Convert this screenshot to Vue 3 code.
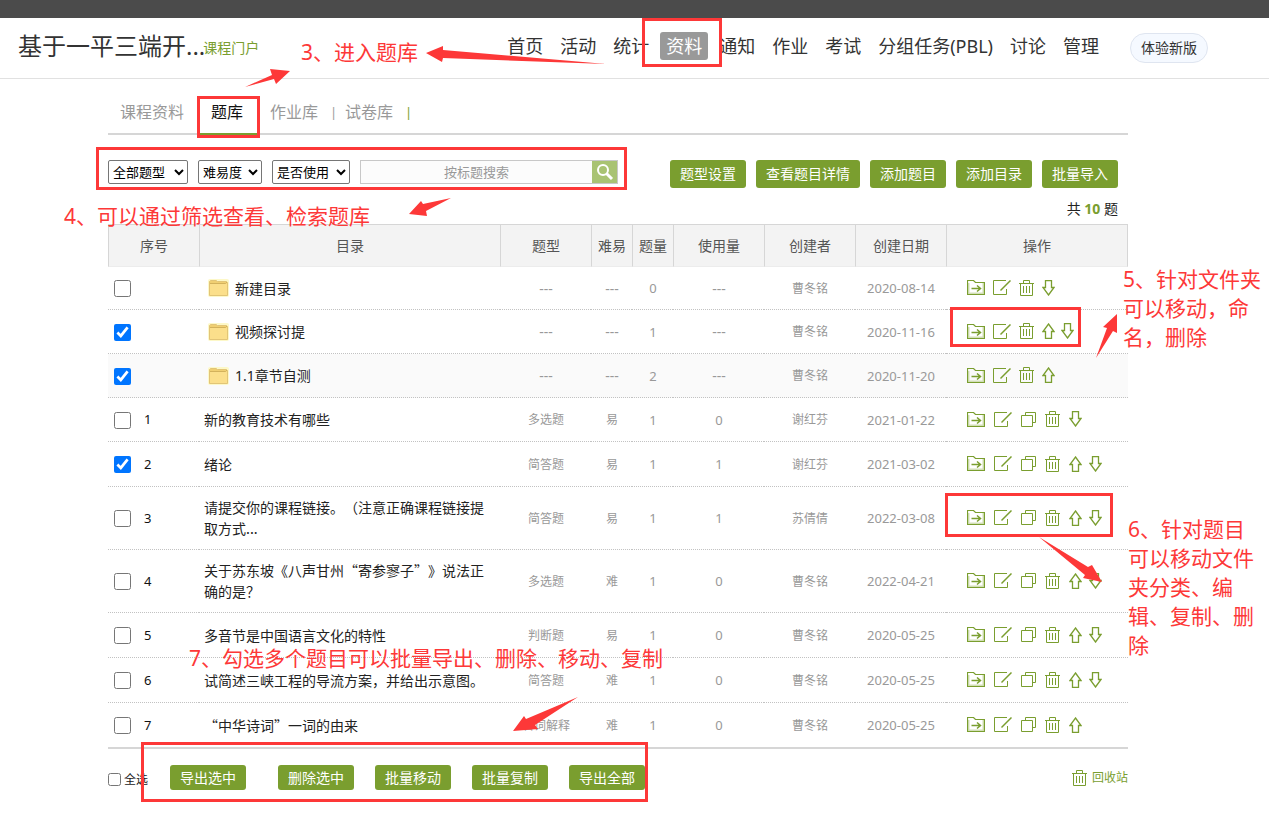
<script setup>
import { ref } from 'vue'

const navItems = ['首页', '活动', '统计', '资料', '通知', '作业', '考试', '分组任务(PBL)', '讨论', '管理']
const tabs = ['课程资料', '题库', '作业库', '试卷库']
const filters = [
  { label: '题型', value: '全部题型', cls: 'type' },
  { label: '难易', value: '难易度', cls: 'level' },
  { label: '使用', value: '是否使用', cls: 'used' }
]
const tools = ['题型设置', '查看题目详情', '添加题目', '添加目录', '批量导入']
const batch = ['导出选中', '删除选中', '批量移动', '批量复制', '导出全部']
const columns = ['序号', '目录', '题型', '难易', '题量', '使用量', '创建者', '创建日期', '操作']
const keyword = ref('')
const all = ref(false)

const labels = { move: '移动', edit: '编辑', copy: '复制', trash: '删除', up: '上移', down: '下移' }
const rows = ref([
  { folder: true, name: '新建目录', count: 0, by: '曹冬铭', date: '2020-08-14', acts: ['move', 'edit', 'trash', 'down'], checked: false },
  { folder: true, name: '视频探讨提', count: 1, by: '曹冬铭', date: '2020-11-16', acts: ['move', 'edit', 'trash', 'up', 'down'], checked: true },
  { folder: true, name: '1.1章节自测', count: 2, by: '曹冬铭', date: '2020-11-20', acts: ['move', 'edit', 'trash', 'up'], checked: true, active: true },
  { no: 1, name: '新的教育技术有哪些', type: '多选题', level: '易', count: 1, used: 0, by: '谢红芬', date: '2021-01-22', acts: ['move', 'edit', 'copy', 'trash', 'down'], checked: false },
  { no: 2, name: '绪论', type: '简答题', level: '易', count: 1, used: 1, by: '谢红芬', date: '2021-03-02', acts: ['move', 'edit', 'copy', 'trash', 'up', 'down'], checked: true },
  { no: 3, name: '请提交你的课程链接。（注意正确课程链接提取方式...', type: '简答题', level: '易', count: 1, used: 1, by: '苏倩倩', date: '2022-03-08', acts: ['move', 'edit', 'copy', 'trash', 'up', 'down'], checked: false },
  { no: 4, name: '关于苏东坡《八声甘州“寄参寥子”》说法正确的是？', type: '多选题', level: '难', count: 1, used: 0, by: '曹冬铭', date: '2022-04-21', acts: ['move', 'edit', 'copy', 'trash', 'up', 'down'], checked: false },
  { no: 5, name: '多音节是中国语言文化的特性', type: '判断题', level: '易', count: 1, used: 0, by: '曹冬铭', date: '2020-05-25', acts: ['move', 'edit', 'copy', 'trash', 'up', 'down'], checked: false },
  { no: 6, name: '试简述三峡工程的导流方案，并给出示意图。', type: '简答题', level: '难', count: 1, used: 0, by: '曹冬铭', date: '2020-05-25', acts: ['move', 'edit', 'copy', 'trash', 'up', 'down'], checked: false },
  { no: 7, name: '“中华诗词”一词的由来', type: '名词解释', level: '难', count: 1, used: 0, by: '曹冬铭', date: '2020-05-25', acts: ['move', 'edit', 'copy', 'trash', 'up'], checked: false }
])
</script>

<template>
  <div class="page">
    <div class="topbar"></div>
    <header class="header">
      <h1 class="title">基于一平三端开...</h1>
      <a class="portal" href="#">课程门户</a>
      <nav class="nav">
        <a v-for="item in navItems" :key="item" href="#" :class="{ current: item === '资料' }">{{ item }}</a>
      </nav>
      <button class="try" type="button">体验新版</button>
    </header>

    <main class="main">
      <div class="tabs">
        <a v-for="tab in tabs" :key="tab" href="#" class="tab" :class="{ on: tab === '题库' }">
          <span>{{ tab }}</span><i v-if="tab !== '课程资料'">|</i>
        </a>
      </div>

      <div class="toolbar">
        <select v-for="f in filters" :key="f.label" :aria-label="f.label" :class="f.cls">
          <option>{{ f.value }}</option>
        </select>
        <form class="search" @submit.prevent>
          <input v-model="keyword" type="text" placeholder="按标题搜索" aria-label="按标题搜索">
          <button type="submit" aria-label="搜索">
            <svg width="18" height="18" viewBox="0 0 18 18"><circle cx="7" cy="7" r="5" fill="none" stroke="#fff" stroke-width="2" /><path d="M10.5 10.5L16 16" stroke="#fff" stroke-width="3" /></svg>
          </button>
        </form>
        <div class="tools">
          <button v-for="t in tools" :key="t" type="button" class="btn">{{ t }}</button>
        </div>
      </div>

      <p class="total">共 <b>10</b> 题</p>

      <table>
        <colgroup>
          <col class="w91"><col><col class="w91"><col class="w41"><col class="w41"><col class="w91"><col class="w91"><col class="w91"><col class="w182">
        </colgroup>
        <thead>
          <tr><th v-for="c in columns" :key="c" scope="col">{{ c }}</th></tr>
        </thead>
        <tbody>
          <tr v-for="(r, i) in rows" :key="i" :class="{ active: r.active, short: i < 4 }">
            <td>
              <label class="pick"><input v-model="r.checked" type="checkbox" :aria-label="r.name"><span>{{ r.no }}</span></label>
            </td>
            <td class="name">
              <a v-if="r.folder" class="folder" href="#">
                <svg width="21" height="18" viewBox="0 0 21 18">
                  <rect x="0" y="0" width="21" height="18" rx="2" fill="#fdf8c8" />
                  <path d="M1.5 16.5V2.5L2.5 1.500H8L9.500 2.500H18.500L19.500 3.500V16.500Z" fill="#f0cf72" stroke="#e2c577" />
                  <path d="M2 16V5H18L19 4V16Z" fill="#fbdf8b" />
                  <path d="M2 4.500H17.500L19 3" fill="none" stroke="#d3b25c" />
                </svg>
                <span>{{ r.name }}</span>
              </a>
              <a v-else href="#">{{ r.name }}</a>
            </td>
            <td :class="{ dash: r.folder }">{{ r.type ?? '---' }}</td>
            <td :class="{ dash: r.folder }">{{ r.level ?? '---' }}</td>
            <td class="num">{{ r.count }}</td>
            <td :class="r.folder ? 'dash' : 'num'">{{ r.used ?? '---' }}</td>
            <td class="by">{{ r.by }}</td>
            <td class="num">{{ r.date }}</td>
            <td>
              <div class="acts" :class="{ tight: r.folder }">
                <button v-for="a in r.acts" :key="a" type="button" :class="a" :aria-label="labels[a]">
                  <svg v-if="a === 'move'" width="18" height="15" viewBox="0 0 18 15">
                    <path d="M1 13.500H17M1.500 3V14M16.500 3V14" stroke="#d3dfb8" stroke-width="2" />
                    <path d="M.5 14.500V.5H6.500L8.500 2.500H17.500V14.500Z" stroke-width="1.200" />
                    <path d="M4.500 8.500H13M10 5.500L13.500 8.500L10 11.500" stroke-width="1.500" />
                  </svg>
                  <svg v-else-if="a === 'edit'" width="18" height="15" viewBox="0 0 18 15">
                    <path d="M13 .5H.5V14.500H13.500V9" /><path d="M17.500 .5L7.500 10.500" stroke-width="1.500" />
                  </svg>
                  <svg v-else-if="a === 'copy'" width="15" height="15" viewBox="0 0 15 15">
                    <path d="M.5 3.500H11.500V14.500H.5ZM4.500 3.500V.5H14.500V10.500H11.500" />
                  </svg>
                  <svg v-else-if="a === 'trash'" width="15" height="16" viewBox="0 0 15 16">
                    <path d="M0 3.500H15M4.500 3.500V.5H10.500V3.500M1.500 3.500V15.500H13.500V3.500M4.500 6V13M7.500 6V13M10.500 6V13" />
                  </svg>
                  <svg v-else-if="a === 'up'" width="13" height="16" viewBox="0 0 13 16">
                    <path d="M6.500 1L12 8.500H9.500V15.300H3.500V8.500H1Z" stroke-width="1.300" />
                  </svg>
                  <svg v-else width="13" height="16" viewBox="0 0 13 16">
                    <path d="M6.500 15L12 7.500H9.500V.7H3.500V7.500H1Z" stroke-width="1.300" />
                  </svg>
                </button>
              </div>
            </td>
          </tr>
        </tbody>
      </table>

      <div class="foot">
        <label class="all"><input v-model="all" type="checkbox"><span>全选</span></label>
        <div class="batch">
          <button v-for="b in batch" :key="b" type="button" class="btn low">{{ b }}</button>
        </div>
        <a class="bin" href="#">
          <svg width="15" height="16" viewBox="0 0 15 16"><path d="M0 3.500H15M4.500 3.500V.5H10.500V3.500M1.500 3.500V15.500H13.500V3.500M4.500 6V13M7.500 6V13M10.500 6V13" /></svg>
          <span>回收站</span>
        </a>
      </div>
    </main>

    <svg class="marks" width="1269" height="820" viewBox="0 0 1269 820" aria-hidden="true">
      <g fill="none" stroke="#fd3838" stroke-width="3">
        <rect x="643.500" y="19.500" width="77" height="46" />
        <rect x="198.500" y="97.500" width="60" height="39" />
        <rect x="97.500" y="148.500" width="528" height="40" />
        <rect x="951.500" y="308.500" width="128" height="37" />
        <rect x="946.500" y="494.500" width="165" height="41" />
        <rect x="142.500" y="743.500" width="504" height="57" />
      </g>
      <g fill="#fd3838">
        <path d="M426 53L443 46V50L606 64L443 58L442 62Z" />
        <path d="M245 87L272 75L270 69L290 71L276 84L274 79Z" />
        <path d="M409 214L421 201L423 204L451 198L426 211L427 216Z" />
        <path d="M1117 314L1103 327L1107 328L1096 358L1113 331L1117 333Z" />
        <path d="M1039 537L1088 567L1092 565L1102 582L1083 578L1085 575Z" />
        <path d="M578 697L526 719L524 716L513 731L538 729L535 725Z" />
      </g>
    </svg>
    <p class="note n3">3、进入题库</p>
    <p class="note n4">4、可以通过筛选查看、检索题库</p>
    <p class="note n5">5、针对文件夹<br>可以移动，命<br>名，删除</p>
    <p class="note n6">6、针对题目<br>可以移动文件<br>夹分类、编<br>辑、复制、删<br>除</p>
    <p class="note n7">7、勾选多个题目可以批量导出、删除、移动、复制</p>
  </div>
</template>

<style>
body { background: #fff; }
</style>

<style scoped>
.page {
  position: relative;
  font-family: "Noto Sans", "Noto Sans CJK SC", sans-serif;
  font-size: 14px;
  line-height: 20px;
  color: #222;
  text-spacing-trim: space-all;
}
.page * { box-sizing: border-box; }
a { color: inherit; text-decoration: none; }
button, input, select { font-family: inherit; }
button { border: 0; padding: 0; cursor: pointer; }
.topbar { height: 18px; background: #4b4b4b; }
.header {
  display: flex;
  align-items: center;
  height: 61px;
  padding: 0 61px 4px 18px;
  border-bottom: 1px solid #e1e1e1;
}
.title { margin: 0; font-size: 24px; line-height: 32px; font-weight: 400; color: #333; white-space: nowrap; }
.portal { margin-left: -2px; color: #7a9e2f; white-space: nowrap; padding-top: 4px; }
.nav { display: flex; gap: 5px; margin-left: auto; }
.nav a { padding: 0 6px; font-size: 18px; line-height: 28px; color: #333; border-radius: 3px; white-space: nowrap; }
.nav a.current { background: #999; color: #fff; }
.try {
  width: 78px;
  height: 30px;
  margin: 4px 0 0 25px;
  padding-bottom: 2px;
  border: 1px solid #dfe5f0;
  border-radius: 15px;
  background: #f5f9ff;
  font-size: 14px;
  color: #333;
}
.main { padding: 0 141px 0 108px; }
.tabs { display: flex; height: 56px; border-bottom: 2px solid #d6d6d6; }
.tab { display: flex; align-items: center; height: 56px; padding-top: 11px; padding-bottom: 2px; margin-right: 12px; font-size: 16px; color: #999; white-space: nowrap; }
.tab:first-child { padding-left: 12px; margin-right: 14px; }
.tab i { width: 3px; margin-left: 12px; font-size: 13px; font-style: normal; color: #9a9a9a; }
.tab.on { padding-left: 13px; padding-bottom: 0; color: #111; border-bottom: 2px solid #7a9e2f; }
.tab.on i { color: #c9a68c; }
.tab:last-child i { color: #7a9e2f; }
.toolbar { display: flex; align-items: flex-start; gap: 10px; padding-top: 25px; }
select { height: 24px; padding: 0; font-size: 13px; color: #000; background: #fff; border: 1px solid #767676; border-radius: 2px; }
.type { width: 80px; }
.level { width: 64px; }
.used { width: 78px; }
.search { display: flex; width: 258px; height: 24px; border: 1px solid #c8c8c8; background: #fcfcfc; }
.search input { flex: 1; min-width: 0; border: 0; padding: 0; background: transparent; font-size: 13px; text-align: center; outline: 0; }
.search input::placeholder { color: #999; }
.search button { display: grid; place-items: center; width: 25px; background: #a9c373; }
.tools { display: flex; gap: 10px; margin: 0 10px 0 auto; }
.btn { height: 28px; padding: 0 10px; border-radius: 3px; background: #7a9e2f; color: #fff; font-size: 14px; line-height: 20px; white-space: nowrap; }
.total { margin: 0; height: 36px; padding: 11px 10px 0 0; text-align: right; }
.total b { color: #7a9e2f; }
table { width: 100%; table-layout: fixed; border-collapse: separate; border-spacing: 0; }
.w91 { width: 91px; }
.w41 { width: 41px; }
.w182 { width: 182px; }
th {
  height: 43px;
  padding: 0;
  font-weight: 400;
  color: #555;
  background: #f3f3f3;
  border-top: 1px solid #d6d6d6;
  border-left: 1px solid #d6d6d6;
  border-bottom: 1px solid #ececec;
}
th:last-child { border-right: 1px solid #d6d6d6; }
td { height: 45px; padding: 1px 0 0 1px; text-align: center; font-size: 12px; color: #999; border-bottom: 1px dotted #c2c2c2; }
.short td { height: 44px; }
tr:first-child td { height: 43px; }
tbody tr:last-child td { height: 46px; border-bottom: 2px solid #d6d6d6; }
.active td { background: #fafafa; }
.num { padding-top: 0; font-size: 13px; }
.dash { font-size: 14px; }
.pick { display: flex; align-items: center; gap: 13px; padding-left: 5px; color: #111; font-size: 13px; }
.pick input { width: 17px; height: 17px; margin: 0; }
.pick span { padding-bottom: 2px; }
td.name { padding: 10px 10px 10px 5px; text-align: left; font-size: 14px; line-height: 21px; color: #222; font-family: "Noto Sans CJK SC", sans-serif; }
.name a { display: block; }
.name .folder { display: flex; align-items: center; gap: 6px; padding-left: 4px; font-family: "Noto Sans", "Noto Sans CJK SC", sans-serif; }
.acts { display: flex; align-items: center; gap: 9px; padding: 0 0 2px 20px; }
.acts.tight { gap: 8px; }
.acts button { display: block; background: none; }
.acts svg, .bin svg { display: block; fill: none; stroke: #7a9e2f; }
.acts .up + .down { margin-left: -2px; }
.foot { display: flex; align-items: center; padding: 16px 0 30px; }
.all { display: flex; align-items: center; gap: 3px; width: 62px; padding-top: 4px; font-size: 12px; white-space: nowrap; }
.all input { width: 13px; height: 13px; margin: 0; }
.batch { display: flex; gap: 21px; }
.batch .btn:first-child { margin-right: 11px; }
.btn.low { height: 25px; }
.bin { display: flex; align-items: center; gap: 5px; margin-left: auto; font-size: 12px; color: #7a9e2f; }
.marks { position: absolute; left: 0; top: 0; pointer-events: none; }
.note { position: absolute; margin: 0; font-size: 21px; line-height: 29px; color: #fd3838; white-space: nowrap; pointer-events: none; }
.n3 { left: 301px; top: 38px; }
.n4 { left: 64px; top: 202px; }
.n5 { left: 1123px; top: 265px; }
.n6 { left: 1128px; top: 515px; }
.n7 { left: 189px; top: 644px; }
</style>
